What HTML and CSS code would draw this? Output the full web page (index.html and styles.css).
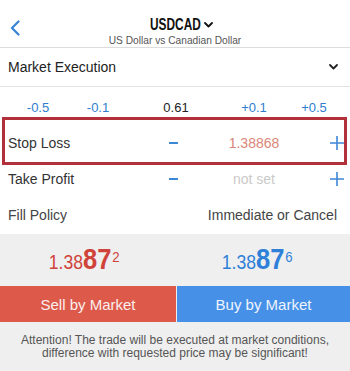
FILE: index.html
```html
<!DOCTYPE html>
<html>
<head>
<meta charset="utf-8">
<link rel="stylesheet" href="styles.css">
</head>
<body>
<div class="screen">
  <header class="header">
    <div class="back">
      <svg width="12" height="16" viewBox="0 0 12 16"><path d="M9.5 1.5 L3 8 L9.5 14.5" fill="none" stroke="#3584d6" stroke-width="2.2" stroke-linecap="round" stroke-linejoin="round"/></svg>
    </div>
    <div class="titles">
      <div class="title"><span class="title-text">USDCAD</span><svg class="tchev" width="9" height="6" viewBox="0 0 9 6"><path d="M1 1 L4.5 4.5 L8 1" fill="none" stroke="#111" stroke-width="1.8" stroke-linecap="round" stroke-linejoin="round"/></svg></div>
      <div class="subtitle">US Dollar vs Canadian Dollar</div>
    </div>
    <div></div>
  </header>

  <div class="exec">
    <span>Market Execution</span>
    <svg width="9" height="6" viewBox="0 0 9 6"><path d="M1 1 L4.5 4.5 L8 1" fill="none" stroke="#222" stroke-width="1.8" stroke-linecap="round" stroke-linejoin="round"/></svg>
  </div>

  <div class="volume">
    <span class="vbtn">-0.5</span>
    <span class="vbtn">-0.1</span>
    <span class="vval">0.61</span>
    <span class="vbtn">+0.1</span>
    <span class="vbtn">+0.5</span>
  </div>

  <div class="lvl lvl-active">
    <span class="lbl">Stop Loss</span>
    <svg class="minus" width="9" height="2" viewBox="0 0 9 2"><rect width="9" height="2" fill="#3d87d6"/></svg>
    <span class="val val-sl">1.38868</span>
    <svg class="plus" width="14" height="14" viewBox="0 0 14 14"><path d="M7 0 V14 M0 7 H14" stroke="#3d87d6" stroke-width="1.6"/></svg>
  </div>

  <div class="lvl lvl-plain">
    <span class="lbl">Take Profit</span>
    <svg class="minus" width="9" height="2" viewBox="0 0 9 2"><rect width="9" height="2" fill="#3d87d6"/></svg>
    <span class="val val-none">not set</span>
    <svg class="plus" width="14" height="14" viewBox="0 0 14 14"><path d="M7 0 V14 M0 7 H14" stroke="#3d87d6" stroke-width="1.6"/></svg>
  </div>

  <div class="fill">
    <span>Fill Policy</span>
    <span>Immediate or Cancel</span>
  </div>

  <section class="trade">
    <div class="prices">
      <div class="price price-sell"><span class="pgroup"><span class="p-small">1.38</span><span class="p-big">87</span><span class="p-sup">2</span></span></div>
      <div class="price price-buy"><span class="pgroup"><span class="p-small">1.38</span><span class="p-big">87</span><span class="p-sup">6</span></span></div>
    </div>
    <div class="buttons">
      <div class="btn btn-sell">Sell by Market</div>
      <div class="btn btn-buy">Buy by Market</div>
    </div>
    <p class="note">Attention! The trade will be executed at market conditions, difference with requested price may be significant!</p>
  </section>
</div>
</body>
</html>
```

FILE: styles.css
```css
* { box-sizing: border-box; }
html, body { margin: 0; padding: 0; background: #fff; }
body {
  font-family: "Liberation Sans", Arial, sans-serif;
  color: #2a2a2a;
  width: 350px;
  height: 371px;
  overflow: hidden;
}
.screen { width: 350px; height: 371px; display: flex; flex-direction: column; }

.header {
  height: 48px;
  border-bottom: 1px solid #dcdcdc;
  display: grid;
  grid-template-columns: 40px 1fr 40px;
  align-items: start;
}
.back { padding: 20px 0 0 9px; line-height: 0; }
.titles { display: flex; flex-direction: column; align-items: center; padding-top: 15px; }
.title {
  display: flex;
  align-items: center;
  height: 19px;
  padding-left: 12px;
}
.title-text {
  display: inline-block;
  font-family: "Liberation Sans", Arial, sans-serif;
  font-weight: bold;
  font-size: 16.5px;
  line-height: 19px;
  color: #111;
  width: 50px;
  white-space: nowrap;
  transform: scaleX(0.72);
  transform-origin: left center;
}
.tchev { margin-left: 4px; margin-top: 1px; }
.subtitle { font-size: 10.2px; line-height: 13px; color: #555; margin-top: 0px; }

.exec {
  height: 39px;
  border-bottom: 1px solid #e2e2e2;
  display: flex;
  align-items: center;
  justify-content: space-between;
  padding: 0 12px 0 8px;
  font-size: 14px;
  color: #222;
}

.volume {
  display: grid;
  grid-template-columns: 60px 60px 96px 60px 60px;
  padding: 13px 0 1px 8px;
  font-size: 13px;
  line-height: 16px;
  text-align: center;
}
.vbtn { color: #2f7dcf; }
.vval { color: #222; }

.lvl {
  display: grid;
  grid-template-columns: 142px 46px 116px 1fr;
  align-items: center;
  font-size: 14px;
}
.lvl-active {
  height: 48px;
  margin: 0 3px 0 2px;
  border: 3px solid #b2303a;
  padding: 3px 0 0 3px;
}
.lvl-plain {
  height: 27px;
  padding: 0 6px 0 8px;
}
.lbl { color: #333; }
.minus { justify-self: center; }
.val { justify-self: center; }
.plus { justify-self: end; }
.val-sl { color: #d98678; }
.val-none { color: #cacaca; }

.fill {
  height: 42px;
  display: flex;
  justify-content: space-between;
  align-items: center;
  padding: 4px 13px 0 8px;
  font-size: 14px;
  color: #444;
}

.trade { flex: 1; background: #efefef; display: flex; flex-direction: column; }
.prices { height: 52px; display: grid; grid-template-columns: 176px 1fr; }
.price {
  display: flex;
  justify-content: center;
  padding-top: 10px;
  padding-right: 8px;
}
.pgroup {
  display: flex;
  align-items: baseline;
  transform: scaleX(0.88);
  transform-origin: center;
}
.price-sell { color: #d0433a; }
.price-buy { color: #2f80d8; padding-right: 12px; }
.p-small { font-size: 20px; line-height: 30px; }
.p-big { font-size: 29px; line-height: 30px; font-weight: bold; }
.p-sup { font-size: 15px; align-self: flex-start; line-height: 15px; margin-top: 5px; margin-left: 1px; }

.buttons { height: 36px; display: grid; grid-template-columns: 176px 1fr; gap: 1px; }
.btn {
  display: flex;
  align-items: center;
  justify-content: center;
  color: #fbeeee;
  font-size: 15px;
}
.btn-sell { background: #dd5a4b; }
.btn-buy { background: #4690e7; color: #eef4fc; }

.note {
  margin: 0;
  padding: 12px 16px 0;
  font-size: 12px;
  line-height: 13px;
  color: #555;
  text-align: center;
}
```
